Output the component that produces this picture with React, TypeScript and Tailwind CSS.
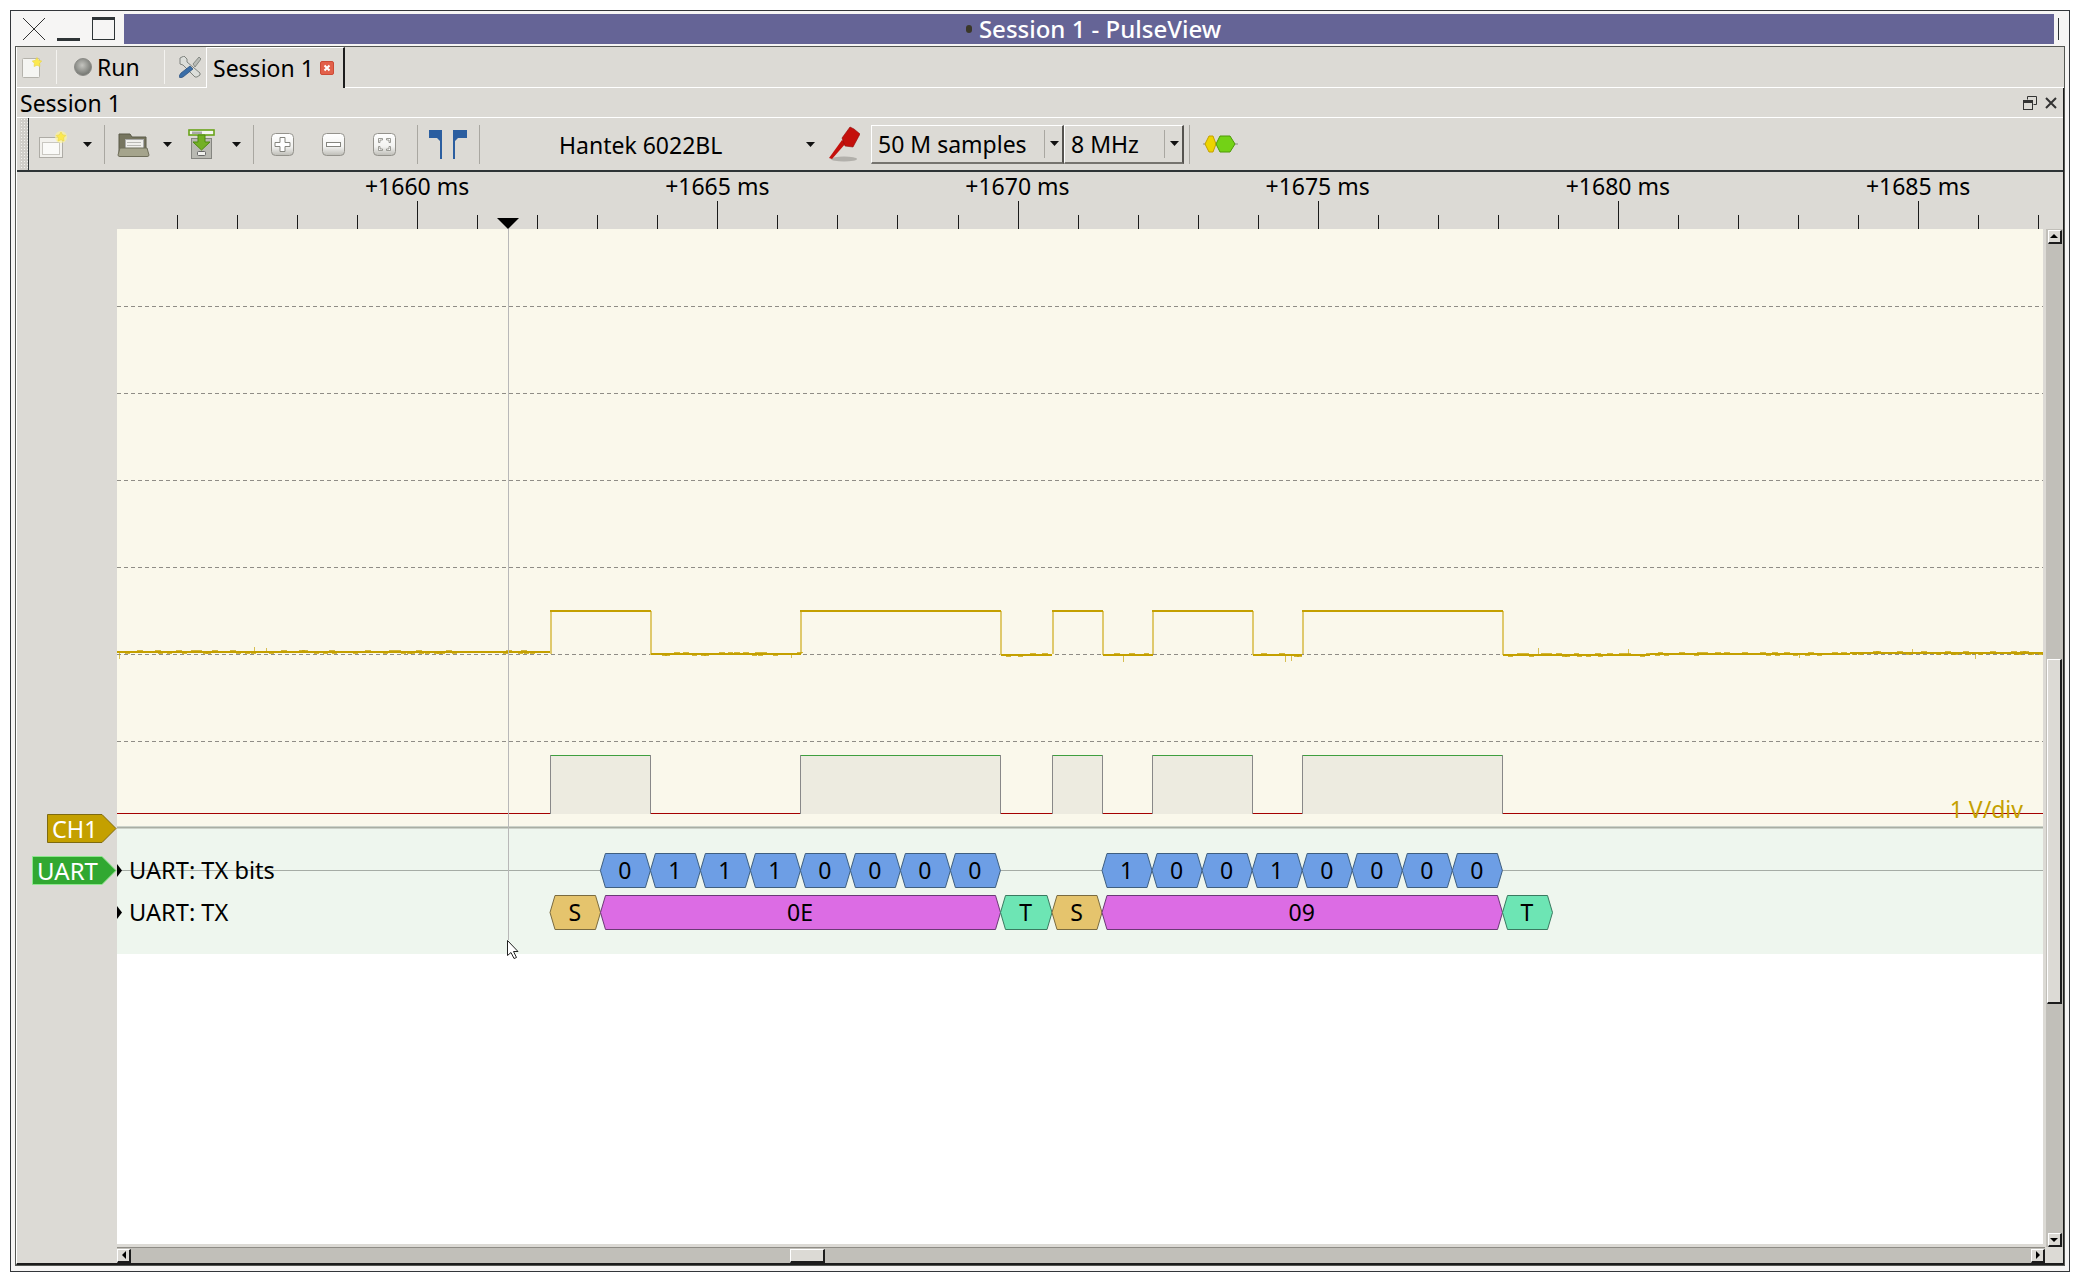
import React from "react";

const OX = 117;
const OY = 229;

// logic edges, high periods
const highs: [number, number][] = [
  [550, 650],
  [800, 1000],
  [1052, 1102],
  [1152, 1252],
  [1302, 1502],
];

const bitsA = ["0", "1", "1", "1", "0", "0", "0", "0"];
const bitsB = ["1", "0", "0", "1", "0", "0", "0", "0"];

const hex = (a: number, b: number, y0: number, y1: number, t = 5) => {
  const m = (y0 + y1) / 2;
  return `${a},${m} ${a + t},${y0} ${b - t},${y0} ${b},${m} ${b - t},${y1} ${a + t},${y1}`;
};

const Hex = ({ a, b, row, label, fill, stroke }: { a: number; b: number; row: number; label: string; fill: string; stroke: string }) => {
  const y0 = row === 0 ? 853.5 - OY : 895.5 - OY;
  const y1 = y0 + 34;
  return (
    <g>
      <polygon points={hex(a - OX, b - OX, y0, y1)} fill={fill} stroke={stroke} strokeWidth="1" />
      <text x={(a + b) / 2 - OX - 0.5} y={y1 - 9} textAnchor="middle" fontSize="23" fill="#000">
        {label}
      </text>
    </g>
  );
};

// pseudo random noise on the flat parts of the analog trace
const noise = (x0: number, x1: number, y: number) => {
  const out: React.ReactNode[] = [];
  for (let x = x0 + 2; x < x1 - 2; x += 3) {
    const r = Math.abs(Math.sin(x * 12.9898) * 43758.5453) % 1;
    if (r > 0.62 && r < 0.92) {
      const up = r > 0.77;
      out.push(
        <rect key={x} x={x - OX} y={y - OY + (up ? -2 : 1)} width={2 + Math.floor(r * 5)} height={1} fill="#c4a000" fillOpacity={0.75} />
      );
    } else if (r >= 0.975) {
      const up = x % 2 === 0;
      const h = 3 + Math.floor((r - 0.975) * 200);
      out.push(
        <rect key={x} x={x - OX} y={y - OY + (up ? -h : 0)} width={1} height={h} fill="#c4a000" fillOpacity={0.65} />
      );
    }
  }
  return out;
};

const Trace = () => {
  const low: [number, number, number][] = [
    [117, 550, 652],
    [651, 801, 654],
    [1001, 1052, 655],
    [1103, 1153, 655],
    [1253, 1302, 655],
    [1503, 1650, 655],
    [1650, 1850, 654],
    [1850, 2043, 653],
  ];
  return (
    <svg width="1926" height="1015" className="block shrink-0">
      <rect x="0" y="0" width="1926" height="597.5" fill="#faf8eb" />
      <rect x="0" y="597" width="1926" height="128" fill="#eef6ee" />
      <rect x="0" y="725" width="1926" height="290" fill="#ffffff" />

      {[306, 393, 480, 567, 654, 741].map((y) => (
        <line key={y} x1="0" x2="1926" y1={y - OY + 0.5} y2={y - OY + 0.5} stroke="#8f8d86" strokeDasharray="4 3" />
      ))}

      {/* logic trace */}
      <line x1="0" x2="1926" y1={813.5 - OY} y2={813.5 - OY} stroke="#a40000" />
      {highs.map(([a, b]) => (
        <g key={a}>
          <rect x={a - OX} y={755 - OY} width={b - a} height={59} fill="#edebe0" />
          <line x1={a - OX} x2={b - OX} y1={755.5 - OY} y2={755.5 - OY} stroke="#3f9f3f" />
          <line x1={a - OX + 0.5} x2={a - OX + 0.5} y1={755 - OY} y2={814 - OY} stroke="#888888" />
          <line x1={b - OX + 0.5} x2={b - OX + 0.5} y1={755 - OY} y2={814 - OY} stroke="#888888" />
        </g>
      ))}

      {/* analog trace */}
      {highs.map(([a, b]) => (
        <g key={a}>
          <line x1={a - OX + 1} x2={a - OX + 1} y1={611 - OY} y2={654 - OY} stroke="#dfc96c" strokeWidth="2" />
          <line x1={b - OX + 1} x2={b - OX + 1} y1={611 - OY} y2={655 - OY} stroke="#dfc96c" strokeWidth="2" />
          <line x1={a - OX} x2={b - OX + 1} y1={611 - OY} y2={611 - OY} stroke="#c4a000" strokeWidth="2" />
        </g>
      ))}
      {low.map(([a, b, y]) => (
        <g key={a}>
          <line x1={a - OX} x2={b - OX} y1={y - OY} y2={y - OY} stroke="#c4a000" strokeWidth="2" />
          {noise(a, b, y)}
        </g>
      ))}
      <text x={2023 - OX} y={818 - OY} textAnchor="end" fontSize="23" fill="#c4a000">
        1 V/div
      </text>

      {/* decoder rows */}
      <line x1="0" x2="1926" y1={827.5 - OY} y2={827.5 - OY} stroke="#a9aea3" strokeWidth="2" />
      <line x1="0" x2="1926" y1={870.5 - OY} y2={870.5 - OY} stroke="#a5aca5" />
      {bitsA.map((v, i) => (
        <Hex key={`a${i}`} a={600.4 + i * 50} b={650.4 + i * 50} row={0} label={v} fill="#6d9ee5" stroke="#3f5f80" />
      ))}
      {bitsB.map((v, i) => (
        <Hex key={`b${i}`} a={1102 + i * 50.05} b={1152.05 + i * 50.05} row={0} label={v} fill="#6d9ee5" stroke="#3f5f80" />
      ))}
      <Hex a={550} b={600.5} row={1} label="S" fill="#e5c46d" stroke="#7a6b40" />
      <Hex a={600.5} b={1000.5} row={1} label="0E" fill="#dc6ce4" stroke="#6a3a75" />
      <Hex a={1000.5} b={1052} row={1} label="T" fill="#6de5b4" stroke="#3a7a60" />
      <Hex a={1052} b={1102} row={1} label="S" fill="#e5c46d" stroke="#7a6b40" />
      <Hex a={1102} b={1502.5} row={1} label="09" fill="#dc6ce4" stroke="#6a3a75" />
      <Hex a={1502.5} b={1552.5} row={1} label="T" fill="#6de5b4" stroke="#3a7a60" />

      <polygon points={`0,${864 - OY} 5,${870.5 - OY} 0,${877 - OY}`} fill="#000" />
      <polygon points={`0,${906 - OY} 5,${912.5 - OY} 0,${919 - OY}`} fill="#000" />
      <text x={129 - OX} y={879 - OY} fontSize="23.6" fill="#000">
        UART: TX bits
      </text>
      <text x={129 - OX} y={921 - OY} fontSize="23.6" fill="#000">
        UART: TX
      </text>

      {/* cursor line and mouse pointer */}
      <line x1={508.5 - OX} x2={508.5 - OX} y1="0" y2={940 - OY} stroke="#b8b8b8" />
      <path
        d={`M${507.5 - OX} ${940.5 - OY} v15 l3.5 -3 l3 6 l2.5 -1 l-3 -6 h4.5 z`}
        fill="#fff"
        stroke="#222"
        strokeWidth="1"
      />
    </svg>
  );
};

const Gutter = () => (
  <svg width="100" height="1034" className="block shrink-0">
    <polygon points={`30.5,${814.5 - OY} 85,${814.5 - OY} 99,${828.5 - OY} 85,${842.5 - OY} 30.5,${842.5 - OY}`} fill="#c4a000" stroke="#7e6a10" />
    <text x="35" y={838 - OY} fontSize="23.5" fill="#fff">
      CH1
    </text>
    <polygon points={`15.5,${856.5 - OY} 85,${856.5 - OY} 99,${870.5 - OY} 85,${884.5 - OY} 15.5,${884.5 - OY}`} fill="#31a831" stroke="#8ee88e" />
    <text x="20" y={880 - OY} fontSize="24" fill="#fff">
      UART
    </text>
  </svg>
);

const Ruler = () => {
  const labels = ["+1660 ms", "+1665 ms", "+1670 ms", "+1675 ms", "+1680 ms", "+1685 ms"];
  const ticks: number[] = [];
  for (let i = 0; i < 32; i++) ticks.push(177 + i * 60.04);
  return (
    <div className="h-[57px] w-[2046px] shrink-0">
      <div className="flex h-[29px] pl-[250px]">
        {labels.map((l) => (
          <span key={l} className="w-[300.2px] shrink-0 text-center text-[23px] leading-[29px]">
            {l}
          </span>
        ))}
      </div>
      <svg width="2046" height="28" className="block">
        {ticks.map((x, i) => {
          const major = i % 5 === 4;
          const px = Math.round(x) - 17 + 0.5;
          return <line key={i} x1={px} x2={px} y1={major ? 0 : 14} y2="28" stroke="#1a1a1a" />;
        })}
        <polygon points="480,17 502,17 491,28" fill="#000" />
      </svg>
    </div>
  );
};

const Arrow = ({ className = "" }: { className?: string }) => (
  <svg width="9" height="5" className={`block shrink-0 ${className}`}>
    <polygon points="0,0 9,0 4.5,5" fill="#111" />
  </svg>
);

const Sep = ({ className = "" }: { className?: string }) => (
  <div className={`h-[39px] w-px shrink-0 bg-[#a9a7a1] ${className}`} />
);

const Star = ({ cx, cy, r }: { cx: number; cy: number; r: number }) => {
  const pts: string[] = [];
  for (let i = 0; i < 10; i++) {
    const a = -Math.PI / 2 + (i * Math.PI) / 5;
    const rr = i % 2 === 0 ? r : r * 0.55;
    pts.push(`${cx + rr * Math.cos(a)},${cy + rr * Math.sin(a)}`);
  }
  return <polygon points={pts.join(" ")} fill="#fce94f" stroke="#e8d44a" strokeWidth="0.6" />;
};

const DocIcon = () => (
  <svg width="20" height="21" className="block shrink-0">
    <rect x="0.5" y="1.5" width="17" height="19" rx="1" fill="#f5f5f2" stroke="#b5b3ac" />
    <Star cx={15} cy={5.5} r={5} />
  </svg>
);

const BallIcon = () => (
  <svg width="18" height="18" className="block shrink-0">
    <defs>
      <radialGradient id="ball" cx="45%" cy="40%" r="60%">
        <stop offset="0%" stopColor="#c4c4bf" />
        <stop offset="100%" stopColor="#72746f" />
      </radialGradient>
    </defs>
    <circle cx="9" cy="9" r="8.5" fill="url(#ball)" stroke="#8c8c88" />
  </svg>
);

const ToolsIcon = () => (
  <svg width="22" height="22" className="block shrink-0">
    <path d="M1 2 L5 0 L8 3 L8 6 L21 17 L21 19 L18 21 L16 21 L4 9 L1 8 Z" fill="#dcdeda" stroke="#747874" strokeWidth="0.9" />
    <path d="M14 8 L20 1 L22 3 L16 11 Z" fill="#babcb7" stroke="#747874" strokeWidth="0.8" />
    <path d="M11 10 L14 13 L4 21 L1 22 L0 20 L2 17 Z" fill="#3a6ea8" stroke="#264a78" strokeWidth="0.7" />
  </svg>
);

const CloseRed = () => (
  <svg width="14" height="14" className="block shrink-0">
    <rect x="0.5" y="0.5" width="13" height="13" rx="1.5" fill="#e2604a" stroke="#cc4a35" />
    <path d="M4.5 4.5 L9.5 9.5 M9.5 4.5 L4.5 9.5" stroke="#fff" strokeWidth="2" />
  </svg>
);

const NewIcon = () => (
  <svg width="30" height="28" className="block shrink-0">
    <rect x="0.5" y="7.5" width="23" height="20" fill="#f2f1ed" stroke="#aeaca6" />
    <rect x="3.5" y="12.5" width="17" height="12" fill="#fafaf8" stroke="#c9c7c1" />
    <circle cx="22" cy="7" r="6" fill="#fcf39a" opacity="0.7" />
    <Star cx={22} cy={7} r={5} />
  </svg>
);

const FolderIcon = () => (
  <svg width="33" height="26" className="block shrink-0">
    <path d="M2 3 h11 l2 3 h14 v16 h-27 z" fill="#76755f" stroke="#5a5a48" />
    <rect x="8.5" y="8.5" width="18" height="12" fill="#f0f0ec" stroke="#aaa" />
    <path d="M10 11.5 h14 M10 14.5 h14" stroke="#b9b9b4" />
    <path d="M3 17 h27 l2 7 q0 1.5 -2 1.5 h-27 q-2 0 -2 -1.5 z" fill="#a5a48c" stroke="#6f6e5a" />
  </svg>
);

const SaveIcon = () => (
  <svg width="27" height="30" className="block shrink-0">
    <rect x="3.5" y="9.5" width="20" height="20" fill="#b9b9b2" stroke="#858580" />
    <rect x="9.5" y="22.5" width="8" height="4" rx="1" fill="#f0f0ec" stroke="#666" />
    <rect x="1" y="1" width="25" height="5" fill="#f5f5f2" stroke="#6aa31a" strokeWidth="1.6" />
    <rect x="4" y="2.5" width="10" height="2.5" fill="#aaa" />
    <path d="M10 6 h7 v7 h5 l-8.5 8 l-8.5 -8 h5 z" fill="#73b025" stroke="#4f8a10" />
  </svg>
);

const SquareButton = ({ children }: { children: React.ReactNode }) => (
  <svg width="23" height="23" className="block shrink-0">
    <defs>
      <linearGradient id="btn" x1="0" y1="0" x2="0" y2="1">
        <stop offset="0%" stopColor="#ffffff" />
        <stop offset="60%" stopColor="#f2f2f0" />
        <stop offset="100%" stopColor="#bdbcb6" />
      </linearGradient>
    </defs>
    <rect x="0.5" y="0.5" width="22" height="22" rx="4" fill="url(#btn)" stroke="#94928c" />
    {children}
  </svg>
);

const CursorsIcon = () => (
  <svg width="38" height="30" className="block shrink-0">
    <path d="M0 1 H13 V30 H11 V12 L8 9 H0 Z" fill="#2b5ea0" />
    <path d="M38 1 H24 V30 H26 V12 L29 9 H38 Z" fill="#2b5ea0" />
  </svg>
);

const ProbeIcon = () => (
  <svg width="32" height="36" className="block shrink-0">
    <ellipse cx="16" cy="33" rx="13" ry="2.5" fill="#8f8e88" opacity="0.55" />
    <path d="M1 32 L14 14 L18 17 L4 33 Z" fill="#c4100c" />
    <path d="M14 12 L22 1 L26 3 L32 8 L25 21 L17 20 Z" fill="#c4100c" stroke="#8f0a08" strokeWidth="0.6" />
  </svg>
);

const DecoderIcon = () => (
  <svg width="35" height="18" className="block shrink-0">
    <line x1="0" x2="35" y1="9" y2="9" stroke="#8c8c88" />
    <polygon points="2,9 6,1 10,1 13,9 10,17 6,17" fill="#edd400" stroke="#c4a000" />
    <polygon points="13,9 17,1 27,1 32,9 27,17 17,17" fill="#73d216" stroke="#4e9a06" />
  </svg>
);

const Combo = ({ label, width, arrowGap }: { label: string; width: string; arrowGap: string }) => (
  <div className={`flex h-[39px] shrink-0 items-center border-t border-l border-t-white border-l-white border-b-2 border-r-2 border-b-[#75736e] border-r-[#55534f] pl-[6px] ${width}`}>
    <span className={`mt-[2px] text-[23px] leading-none ${arrowGap}`}>{label}</span>
    <div className="h-[28px] w-px shrink-0 bg-[#a9a7a1]" />
    <Arrow className="ml-[5px]" />
  </div>
);

const ScrollBtn = ({ dir }: { dir: "up" | "down" | "left" | "right" }) => {
  const pts = {
    up: "1,6 9,6 5,2",
    down: "1,3 9,3 5,7",
    left: "7,1 7,9 3,5",
    right: "3,1 3,9 7,5",
  }[dir];
  return (
    <div className="flex h-[14px] w-[14px] shrink-0 items-center justify-center border-t border-l border-t-white border-l-white border-b-2 border-r-2 border-b-[#1c1c1c] border-r-[#1c1c1c] bg-[#dcdad5]">
      <svg width="10" height="10" className="block">
        <polygon points={pts} fill="#000" />
      </svg>
    </div>
  );
};

export default function App() {
  return (
    <div className="h-[1282px] w-[2080px] overflow-hidden bg-white p-[10px] font-['Noto_Sans','Open_Sans',sans-serif] text-black">
      {/* window frame */}
      <div className="flex h-[1262px] w-[2060px] flex-col border border-[#33363a] bg-[#f6f5f4]">
        {/* title bar */}
        <div className="flex h-[35px] shrink-0 items-center pl-[11px]">
          <svg width="24" height="24" className="block shrink-0">
            <path d="M1 1 L23 23 M23 1 L1 23" stroke="#333" strokeWidth="1" />
          </svg>
          <div className="ml-[11px] mt-[21px] h-[3px] w-[23px] shrink-0 bg-[#2e3436]" />
          <div className="ml-[12px] h-[23px] w-[23px] shrink-0 border border-t-[3px] border-[#2e3436]" />
          <div className="ml-[9px] flex h-[30px] w-[1930px] shrink-0 items-center justify-center bg-[#656496] pl-[9px] text-[24px] font-medium text-white">
            <span className="mr-[7px] h-[8px] w-[6px] rounded-full bg-[#3a3728]" />
            Session 1 - PulseView
          </div>
          <div className="ml-[4px] h-[22px] w-px shrink-0 bg-[#2e3436]" />
        </div>

        {/* app frame */}
        <div className="mx-[4px] flex h-[1220px] flex-col border border-[#555753] bg-[#dcdad5]">
          <div className="flex h-full flex-col border-l border-l-white border-b-2 border-b-[#1c1c1c]">
            {/* tab bar */}
            <div className="flex h-[41px] shrink-0">
              <div className="flex w-[189px] shrink-0 items-center border-b border-b-white pl-[5px]">
                <DocIcon />
                <div className="ml-[14px] h-[34px] w-px shrink-0 bg-[#f4f3f0]" />
                <div className="ml-[17px]">
                  <BallIcon />
                </div>
                <span className="ml-[5px] w-[67px] shrink-0 text-[23px] leading-none">Run</span>
                <div className="h-[34px] w-px shrink-0 bg-[#f4f3f0]" />
                <div className="ml-[14px]">
                  <ToolsIcon />
                </div>
              </div>
              <div className="flex w-[139px] shrink-0 items-center border-l border-t border-r-2 border-l-white border-t-white border-r-[#1c1c1c] pl-[6px]">
                <span className="text-[23px] leading-none">Session 1</span>
                <div className="ml-[6px]">
                  <CloseRed />
                </div>
              </div>
              <div className="flex-1 border-b border-b-white" />
            </div>

            <div className="flex min-h-0 flex-1 flex-col border-r border-r-[#1c1c1c]">
              {/* dock title */}
              <div className="flex h-[30px] shrink-0 items-center border-b border-b-white pl-[3px] pr-[6px]">
                <span className="mt-[2px] text-[23px] leading-none">Session 1</span>
                <div className="flex-1" />
                <svg width="14" height="14" className="block shrink-0">
                  <path d="M4.5 3.5 V0.5 H13.5 V8.5 H10.5" fill="none" stroke="#333" />
                  <rect x="0.5" y="4.5" width="9" height="9" fill="none" stroke="#333" strokeWidth="1" />
                  <rect x="0" y="4" width="10" height="3" fill="#333" />
                </svg>
                <svg width="12" height="12" className="ml-[8px] block shrink-0">
                  <path d="M1 1 L11 11 M11 1 L1 11" stroke="#333" strokeWidth="2" />
                </svg>
              </div>

              {/* toolbar */}
              <div className="flex h-[54px] shrink-0 items-center border-b-2 border-b-[#2e3436]">
                <div className="ml-[3px] h-full w-[8px] shrink-0 bg-[#cfcdc8] bg-[radial-gradient(#f4f3f0_1px,transparent_1px)] bg-[length:3px_3px]" />
                <div className="h-full w-px shrink-0 bg-[#2e3436]" />
                <div className="ml-[10px]">
                  <NewIcon />
                </div>
                <Arrow className="ml-[14px]" />
                <Sep className="ml-[12px]" />
                <div className="ml-[12px]">
                  <FolderIcon />
                </div>
                <Arrow className="ml-[13px]" />
                <div className="ml-[16px]">
                  <SaveIcon />
                </div>
                <Arrow className="ml-[17px]" />
                <Sep className="ml-[12px]" />
                <div className="ml-[17px]">
                  <SquareButton>
                    <path d="M9 4.5 h5 v5 h5 v4 h-5 v5 h-5 v-5 h-5 v-4 h5 z" fill="#fff" stroke="#85857f" />
                  </SquareButton>
                </div>
                <div className="ml-[28px]">
                  <SquareButton>
                    <rect x="4.5" y="9.5" width="14" height="4" fill="#fff" stroke="#85857f" />
                  </SquareButton>
                </div>
                <div className="ml-[28px]">
                  <SquareButton>
                    <path d="M9.5 5.5 h-4 v4 h1.5 v-2.5 h2.5 z M13.5 5.5 h4 v4 h-1.5 v-2.5 h-2.5 z M9.5 17.5 h-4 v-4 h1.5 v2.5 h2.5 z M13.5 17.5 h4 v-4 h-1.5 v2.5 h-2.5 z" fill="#fff" stroke="#85857f" strokeWidth="0.8" />
                  </SquareButton>
                </div>
                <Sep className="ml-[21px]" />
                <div className="ml-[11px]">
                  <CursorsIcon />
                </div>
                <Sep className="ml-[12px]" />
                <span className="ml-[79px] mt-[2px] w-[247px] shrink-0 text-[23px] leading-none">Hantek 6022BL</span>
                <Arrow />
                <div className="ml-[13px]">
                  <ProbeIcon />
                </div>
                <div className="ml-[11px]">
                  <Combo label="50 M samples" width="w-[193px]" arrowGap="w-[166px]" />
                </div>
                <Combo label="8 MHz" width="w-[120px]" arrowGap="w-[93px]" />
                <Sep className="ml-[5px]" />
                <div className="ml-[13px]">
                  <DecoderIcon />
                </div>
              </div>

              {/* ruler */}
              <Ruler />

              {/* view */}
              <div className="flex min-h-0 flex-1">
                <Gutter />
                <div className="flex w-[1946px] shrink-0 flex-col">
                  <div className="flex h-[1018px] shrink-0">
                    <Trace />
                    <div className="ml-[3px] flex h-[1018px] w-[17px] shrink-0 flex-col items-center bg-[#c1bfb9] pt-px">
                      <ScrollBtn dir="up" />
                      <div className="h-[415px] shrink-0" />
                      <div className="h-[345px] w-[15px] shrink-0 border-t border-l border-t-white border-l-white border-b-2 border-r-2 border-b-[#1c1c1c] border-r-[#1c1c1c] bg-[#dcdad5]" />
                      <div className="flex-1" />
                      <ScrollBtn dir="down" />
                    </div>
                  </div>
                  <div className="flex h-[16px] w-[1928px] shrink-0 items-center border-t border-t-[#8e8c86] bg-[#c1bfb9]">
                    <ScrollBtn dir="left" />
                    <div className="w-[659px] shrink-0" />
                    <div className="h-[14px] w-[35px] shrink-0 border-t border-l border-t-white border-l-white border-b-2 border-r-2 border-b-[#1c1c1c] border-r-[#1c1c1c] bg-[#dcdad5]" />
                    <div className="flex-1" />
                    <ScrollBtn dir="right" />
                  </div>
                </div>
              </div>
            </div>
          </div>
        </div>
      </div>
    </div>
  );
}
